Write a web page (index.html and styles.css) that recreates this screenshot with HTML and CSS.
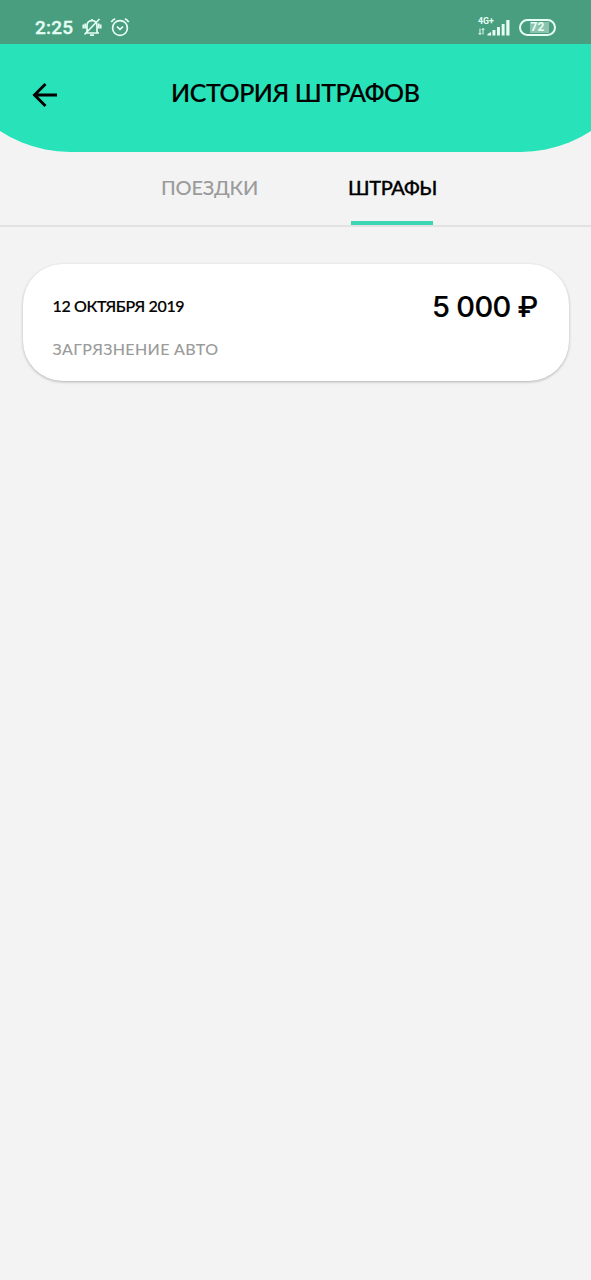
FILE: index.html
```html
<!DOCTYPE html>
<html lang="ru">
<head>
<meta charset="utf-8">
<title>История штрафов</title>
<link rel="stylesheet" href="styles.css">
</head>
<body>
<div class="top">
  <div class="statusbar">
    <span class="clock">2:25</span>
    <svg class="bell" width="20" height="20" viewBox="0 0 20 20"><path d="M3 16h14M5 15.500V8.500Q5 4 10 3.500Q15 4 15 8.500v7M10 3.500V2M2.500 17.500L17.500 2"/><path d="M8 18.200h4M1.300 7.500v4M18.700 7.500v4M3.200 6.500v5M16.800 6.500v5"/></svg>
    <svg class="alarm" width="20" height="20" viewBox="0 0 20 20"><circle cx="10" cy="11" r="7.400"/><path d="M1.300 5.200Q2.500 2.800 5.200 1.900M14.800 1.900Q17.500 2.800 18.700 5.200M7 9.700l3 2.600 3-2.600"/></svg>
    <div class="network">
      <span class="network-type">4G+</span>
      <svg class="signal" width="32" height="17" viewBox="0 0 32 17"><path d="M9.500 15.500v-1.500l3.600-2v3.500zM14.500 15.500v-5.500h2.900v5.500zM19 15.500V7h2.900v8.500zM23.700 15.500v-11.500h2.900v11.500zM28.300 15.500V0h3.200v15.500z"/><path class="arrows" d="M2 8.500v6M.6 13L2 14.500l1.400-1.500M5 14.500v-6M3.700 10L5 8.500l1.500 1.500"/></svg>
    </div>
    <div class="battery"><span>72</span></div>
  </div>
  <header class="header">
    <svg class="back" width="26" height="26" viewBox="0 0 26 26"><path d="M25 13H2.500M13.500 2L2.500 13l11 11"/></svg>
    <h1 class="title">ИСТОРИЯ ШТРАФОВ</h1>
  </header>
</div>
<nav class="tabs">
  <a class="tab trips">ПОЕЗДКИ</a>
  <a class="tab fines">ШТРАФЫ</a>
</nav>
<main class="content">
  <article class="card">
    <div class="info">
      <div class="date">12 ОКТЯБРЯ 2019</div>
      <div class="reason">ЗАГРЯЗНЕНИЕ АВТО</div>
    </div>
    <div class="amount">5 000 ₽</div>
  </article>
</main>
</body>
</html>
```
FILE: styles.css
```css
* { box-sizing: border-box; }
body { margin: 0; min-height: 1280px; background: #f3f3f3; color: #000; font-family: Lato, "Noto Sans", sans-serif; }
svg { display: block; fill: none; flex: none; }
.top { height: 152px; background: #28e3ba; clip-path: inset(0 -57px 0 -57px round 0 0 127px 127px); }
.statusbar { display: flex; align-items: center; height: 44px; padding: 10px 35px 0; background: #489e7f; color: #e6fff5; }
.clock { width: 47px; padding: 1px 0 0; font: 500 19px/22px Roboto, sans-serif; letter-spacing: .25px; -webkit-text-stroke: .3px; }
.bell, .alarm { stroke: #e6fff5; stroke-width: 1.7; }
.alarm { margin-left: 8px; }
.network { display: flex; flex-direction: column; margin-left: auto; width: 32px; height: 20px; }
.network-type { font: 700 8.800px/8px Roboto, sans-serif; height: 3px; }
.signal { fill: #e6fff5; }
.arrows { fill: none; stroke: #e6fff5; stroke-width: 1; }
.battery { display: flex; justify-content: center; align-items: center; width: 37px; height: 17px; margin-left: 9px; border: 2px solid #e6fff5; border-radius: 9px; background: linear-gradient(#8bc3ae, #8bc3ae) 9px 1px / 19px 11px no-repeat; font: 700 12px/13px Roboto, sans-serif; }
.battery span { padding-top: 1px; }
.header { display: flex; align-items: center; height: 102px; padding-left: 32px; }
.back { stroke: #000; stroke-width: 2.900; }
.title { margin: 0 0 6px 113px; font-size: 25px; line-height: 30px; font-weight: 500; letter-spacing: -.45px; white-space: nowrap; -webkit-text-stroke: .2px; }
.tabs { display: flex; height: 75px; border-bottom: 2px solid #e2e2e2; font-size: 20px; line-height: 24px; font-weight: 500; }
.tab { padding-top: 23px; white-space: nowrap; letter-spacing: -.2px; }
.trips { margin-left: 161px; width: 190px; color: #9b9b9b; }
.fines { width: 82px; height: 73px; border-radius: 2px 2px 0 0; background: linear-gradient(#3dd6b5, #3dd6b5) bottom / 100% 4px no-repeat; text-indent: -3px; letter-spacing: -.4px; -webkit-text-stroke: .3px; }
.content { padding: 37px 22.500px; }
.card { display: flex; justify-content: space-between; height: 117px; padding: 26px 31px 0 30px; border-radius: 40px; background: #fff; box-shadow: 0 1px 3px #0004; }
.date, .reason { font-size: 16px; line-height: 20px; font-weight: 500; white-space: nowrap; }
.date { margin-top: 6px; letter-spacing: -.37px; -webkit-text-stroke: .2px; }
.reason { margin-top: 23px; letter-spacing: .35px; color: #9b9b9b; }
.amount { font: 500 29px/34px Inter, sans-serif; letter-spacing: -.7px; white-space: nowrap; -webkit-text-stroke: .2px; }
```
